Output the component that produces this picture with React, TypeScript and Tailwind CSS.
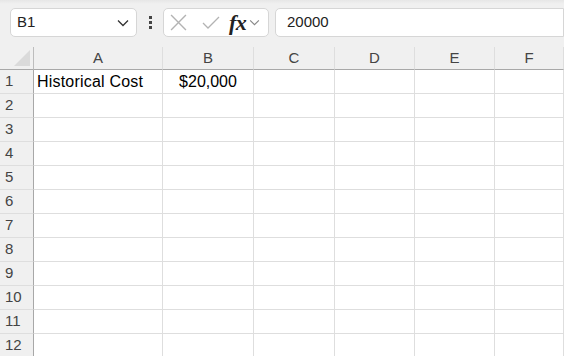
import React from "react"

const cols = ["A", "B", "C", "D", "E", "F"]
const rows = Array.from({ length: 12 }, (_, i) => i + 1)

const font = { fontFamily: '"Liberation Sans", Arial, sans-serif' }

function Chevron({ className }: { className?: string }) {
  return (
    <svg viewBox="0 0 12 8" className={className} fill="none" stroke="currentColor" strokeWidth="1.3">
      <path d="M1 1.5 L6 6.5 L11 1.5" />
    </svg>
  )
}

function Toolbar() {
  return (
    <div className="h-[47px] flex flex-row items-start pt-[8px] bg-gradient-to-b from-[#e6e6e6] via-[#f0f0f0] to-[#f0f0f0] via-[8%]">
      <div className="ml-[10px] w-[127px] h-[29px] bg-white border border-[#d6d6d6] rounded-[5px] flex flex-row items-center pl-[6px] pr-[7px]">
        <span className="text-[15px] text-[#222] flex-1">B1</span>
        <Chevron className="w-[12px] h-[8px] text-[#333]" />
      </div>
      <div className="w-[26px] h-[29px] flex flex-col items-center justify-center gap-[2px]">
        <div className="w-[3px] h-[3px] bg-[#444]" />
        <div className="w-[3px] h-[3px] bg-[#444]" />
        <div className="w-[3px] h-[3px] bg-[#444]" />
      </div>
      <div className="w-[106px] h-[29px] bg-white border border-[#d6d6d6] rounded-[5px] flex flex-row items-center pl-[6px]">
        <svg viewBox="0 0 16 16" className="w-[17px] h-[17px]" stroke="#b3b3b3" strokeWidth="1.3" fill="none">
          <path d="M1 1 L15 15 M15 1 L1 15" />
        </svg>
        <svg viewBox="0 0 18 14" className="w-[18px] h-[14px] ml-[15px]" stroke="#b3b3b3" strokeWidth="1.3" fill="none">
          <path d="M1 7 L6 12 L17 1" />
        </svg>
        <span
          className="ml-[9px] text-[22px] italic font-bold text-[#222] leading-none tracking-[-0.5px]"
          style={{ fontFamily: '"Liberation Serif", serif' }}
        >
          fx
        </span>
        <Chevron className="ml-[3px] w-[11px] h-[7px] text-[#888]" />
      </div>
      <div className="ml-[6px] flex-1 h-[29px] bg-white border border-[#d6d6d6] rounded-l-[5px] flex items-center pl-[11px]">
        <span className="text-[15px] text-[#222]">20000</span>
      </div>
    </div>
  )
}

function App() {
  return (
    <div className="w-[564px] h-[356px] overflow-hidden bg-[#f0f0f0]" style={font}>
      <Toolbar />
      <div className="grid grid-cols-[34px_129px_91px_81px_80px_80px_1fr] bg-white">
        {/* header row */}
        <div className="h-[23px] bg-[#f0f0f0] border-b border-b-[#a8a8a8] border-r border-r-[#bdbdbd] relative">
          <svg viewBox="0 0 16 16" className="absolute left-[14px] top-[3px] w-[16px] h-[16px]">
            <path d="M16 0 L16 16 L0 16 Z" fill="#dadada" />
          </svg>
        </div>
        {cols.map((c) => (
          <div
            key={c}
            className="h-[23px] bg-[#f0f0f0] border-b border-b-[#a8a8a8] border-r border-r-[#dedede] flex items-center justify-center text-[15px] text-[#444]"
          >
            {c}
          </div>
        ))}
        {rows.map((r) => (
          <React.Fragment key={r}>
            <div className="h-[24px] bg-[#f0f0f0] border-r border-r-[#a8a8a8] border-b border-b-[#dedede] flex items-center pl-[5px] text-[15px] text-[#444]">
              {r}
            </div>
            {cols.map((c) => (
              <div
                key={c}
                className="h-[24px] border-r border-b border-[#dedede] flex items-center text-[16px] text-black overflow-hidden whitespace-nowrap"
              >
                {r === 1 && c === "A" && <span className="pl-[3px] tracking-[0.2px]">Historical Cost</span>}
                {r === 1 && c === "B" && <span className="w-full text-center">$20,000</span>}
              </div>
            ))}
          </React.Fragment>
        ))}
      </div>
    </div>
  )
}

export default App
